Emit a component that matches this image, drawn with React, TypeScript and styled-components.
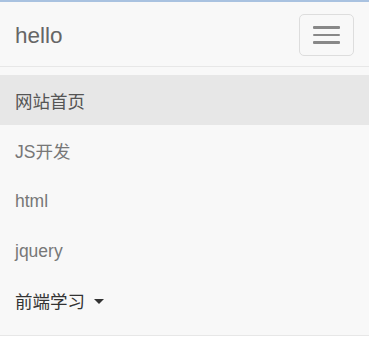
import styled, { createGlobalStyle } from 'styled-components';

const GlobalStyle = createGlobalStyle`
	body {
		margin: 0;
		background: #fff;
		font-family: "Liberation Sans", "Noto Sans CJK SC", Arial, sans-serif;
	}
`;

const TopLine = styled.div`
	height: 2px;
	background-color: #a9c2e0;
`;

const Navbar = styled.nav`
	background-color: #f8f8f8;
	border-bottom: 1px solid #e7e7e7;
`;

const Header = styled.div`
	height: 64px;
	display: flex;
	align-items: center;
	justify-content: space-between;
	padding: 0 15px 0 15px;
	border-bottom: 1px solid #e7e7e7;
`;

const Brand = styled.a`
	font-size: 22.5px;
	padding-top: 3px;
	color: #666;
	text-decoration: none;
`;

const Toggle = styled.button`
	width: 55px;
	height: 42px;
	margin-top: 2px;
	padding: 0;
	background: transparent;
	border: 1px solid #ddd;
	border-radius: 5px;
	display: flex;
	flex-direction: column;
	align-items: center;
	justify-content: center;
	gap: 5px;
`;

const IconBar = styled.span`
	display: block;
	width: 27px;
	height: 2.5px;
	border-radius: 1px;
	background-color: #888;
`;

const NavList = styled.ul`
	list-style: none;
	margin: 0;
	padding: 8px 0 10px;
`;

const NavItem = styled.li<{ $active?: boolean; $latin?: boolean }>`
	height: 50px;
	display: flex;
	align-items: center;
	padding: ${(p) => (p.$latin ? '2px 15px 0' : '0 15px')};
	font-size: 17.5px;
	color: ${(p) => (p.$active ? '#555' : '#777')};
	background-color: ${(p) => (p.$active ? '#e7e7e7' : 'transparent')};
	box-sizing: border-box;
`;

const DropdownItem = styled(NavItem)`
	color: #333;
`;

const Caret = styled.span`
	display: inline-block;
	width: 0;
	height: 0;
	margin-left: 9px;
	margin-top: 2px;
	border-top: 5px solid #333;
	border-left: 5px solid transparent;
	border-right: 5px solid transparent;
`;

const links = [
	{ label: 'JS开发', latin: false },
	{ label: 'html', latin: true },
	{ label: 'jquery', latin: true },
];

export default function App() {
	return (
		<>
			<GlobalStyle />
			<TopLine />
			<Navbar>
				<Header>
					<Brand href="#">hello</Brand>
					<Toggle>
						<IconBar />
						<IconBar />
						<IconBar />
					</Toggle>
				</Header>
				<NavList>
					<NavItem $active>网站首页</NavItem>
					{links.map((l) => (
						<NavItem key={l.label} $latin={l.latin}>
							{l.label}
						</NavItem>
					))}
					<DropdownItem>
						前端学习
						<Caret />
					</DropdownItem>
				</NavList>
			</Navbar>
		</>
	);
}
